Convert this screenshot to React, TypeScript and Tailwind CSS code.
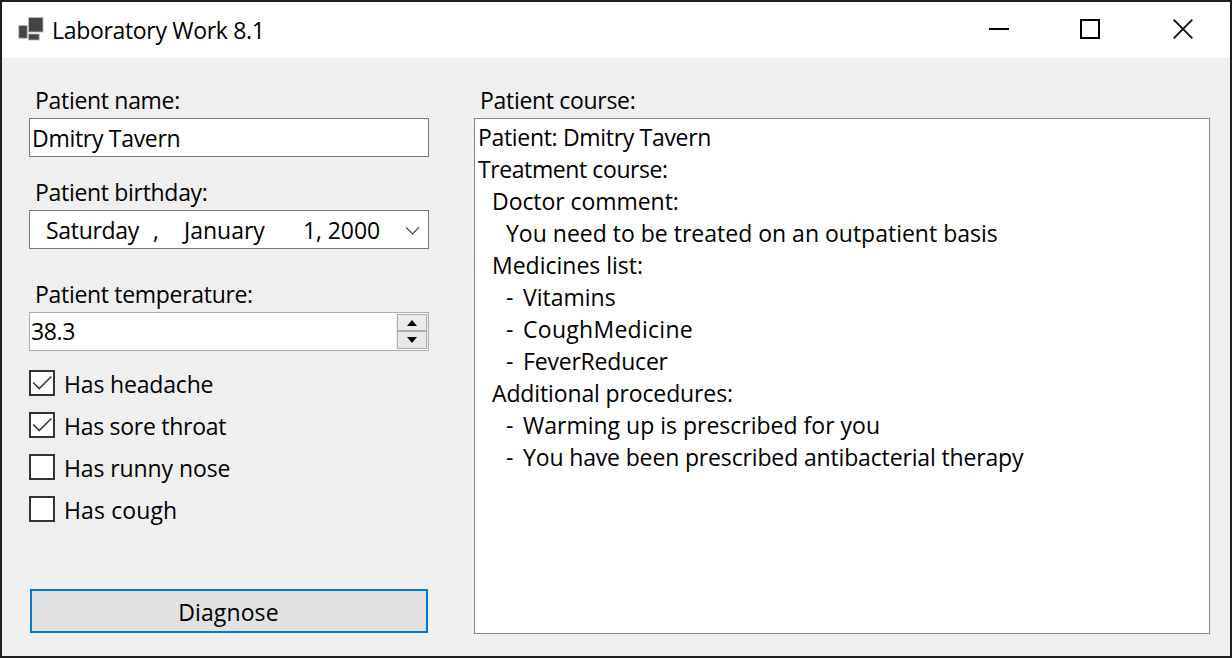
import { useState, type ReactNode } from "react";

const courseLines: { text: string; bullet?: boolean; className: string }[] = [
  { text: "Patient: Dmitry Tavern", className: "pl-[3px] tracking-[-0.32px]" },
  { text: "Treatment course:", className: "pl-[3px] tracking-[-0.41px]" },
  { text: "Doctor comment:", className: "pl-[17px] tracking-[-0.06px]" },
  { text: "You need to be treated on an outpatient basis", className: "pl-[31px]" },
  { text: "Medicines list:", className: "pl-[17px]" },
  { text: "Vitamins", bullet: true, className: "" },
  { text: "CoughMedicine", bullet: true, className: "tracking-[0.28px]" },
  { text: "FeverReducer", bullet: true, className: "tracking-[-0.2px]" },
  { text: "Additional procedures:", className: "pl-[17px] tracking-[-0.13px]" },
  { text: "Warming up is prescribed for you", bullet: true, className: "" },
  { text: "You have been prescribed antibacterial therapy", bullet: true, className: "tracking-[-0.15px]" },
];

function FieldLabel({ children }: { children: ReactNode }) {
  return <div className="h-8 pl-1.5 leading-[29px] tracking-[-0.31px]">{children}</div>;
}

function CheckRow({ label, initial, className }: { label: string; initial: boolean; className: string }) {
  const [checked, setChecked] = useState(initial);
  return (
    <button
      type="button"
      role="checkbox"
      aria-checked={checked}
      onClick={() => setChecked(!checked)}
      className="flex h-[42px] items-start text-left"
    >
      <span className="flex size-[26px] shrink-0 items-center justify-center border-2 border-[#333333] bg-white">
        {checked && (
          <svg width="22" height="22" viewBox="0 0 22 22" fill="none" stroke="#3c3c3c" strokeWidth="1.7">
            <path d="M2.2 10.5 L8.2 16.5 L20.4 4.5" />
          </svg>
        )}
      </span>
      <span className={"pl-[9px] leading-[28px] " + className}>{label}</span>
    </button>
  );
}

export default function App() {
  return (
    <div className="flex h-[658px] w-[1232px] flex-col overflow-hidden border-2 border-[#202022] bg-[#efefef] font-['Open_Sans','Noto_Sans',sans-serif] text-[23px] whitespace-pre text-black">
      <header className="flex h-14 shrink-0 items-center bg-white">
        <svg className="ml-[15px] mb-[3px]" width="28" height="26" viewBox="0 0 28 26">
          <g fill="#444444" stroke="#b8b8b8" strokeWidth="0.8">
            <rect x="1.8" y="9.6" width="8.4" height="12.6" />
            <rect x="11.6" y="1.6" width="14.4" height="14.4" />
            <rect x="11.6" y="18" width="10.6" height="6" />
          </g>
        </svg>
        <h1 className="ml-[7px] flex-1 leading-[56px] tracking-[-0.32px]">Laboratory Work 8.1</h1>
        <div className="flex items-center pr-[37px] pb-0.5">
          <svg width="20" height="22" viewBox="0 0 20 22"><path d="M0 11h20" stroke="#000" strokeWidth="2" /></svg>
          <svg className="ml-[71px]" width="20" height="22" viewBox="0 0 20 22">
            <rect x="1" y="2" width="18" height="18" fill="none" stroke="#000" strokeWidth="2" />
          </svg>
          <svg className="ml-[73px]" width="20" height="22" viewBox="0 0 20 22">
            <path d="M0.7 1.7 L19.3 20.3 M19.3 1.7 L0.7 20.3" stroke="#111" strokeWidth="1.9" />
          </svg>
        </div>
      </header>

      <main className="flex flex-1 pt-7 pl-[27px]">
        <section className="flex w-[400px] flex-col">
          <FieldLabel>Patient name:</FieldLabel>
          <div className="h-[39px] border border-[#7a7a7a] bg-white pl-0.5 leading-[38px] tracking-[-0.3px]">Dmitry Tavern</div>

          <div className="h-[21px]" />
          <FieldLabel>Patient birthday:</FieldLabel>
          <div className="flex h-[39px] border border-[#7a7a7a] bg-white pl-4 leading-[38px]">
            <span className="w-[107px] tracking-[-0.3px]">Saturday</span>
            <span className="w-[31px]">,</span>
            <span className="w-[119px]">January</span>
            <span className="w-[102px] tracking-[-0.1px]">1, 2000</span>
            <svg className="mt-3" width="15" height="15" viewBox="0 0 15 15" fill="none" stroke="#444" strokeWidth="1.3">
              <path d="M1 4.4 L7.5 10.9 L14 4.4" />
            </svg>
          </div>

          <div className="h-[31px]" />
          <FieldLabel>Patient temperature:</FieldLabel>
          <div className="flex h-[39px] justify-between border border-[#abadb3] bg-white pl-px leading-[37px]">
            <span className="tracking-[-0.4px]">38.3</span>
            <div className="my-px flex w-8 flex-col bg-[#efefef] pr-px pl-px">
              <div className="flex h-[17px] items-center justify-center border border-[#acacac] bg-[#ebebeb]">
                <svg width="10" height="6" viewBox="0 0 10 6"><path d="M5 0 L10 6 H0 Z" /></svg>
              </div>
              <div className="flex h-[18px] items-center justify-center border border-[#acacac] bg-[#e9e9e9]">
                <svg width="10" height="6" viewBox="0 0 10 6"><path d="M0 0 H10 L5 6 Z" /></svg>
              </div>
            </div>
          </div>

          <div className="flex flex-col pt-[19px]">
            <CheckRow label="Has headache" initial={true} className="tracking-[-0.17px]" />
            <CheckRow label="Has sore throat" initial={true} className="tracking-[-0.27px]" />
            <CheckRow label="Has runny nose" initial={false} className="tracking-[-0.1px]" />
            <CheckRow label="Has cough" initial={false} className="tracking-[0.12px]" />
          </div>

          <button
            type="button"
            className="mx-px mt-[51px] h-11 border-2 border-[#0078d7] bg-[#e1e1e1] pr-px text-center leading-[42px] tracking-[0.1px]"
          >
            Diagnose
          </button>
        </section>

        <section className="ml-[45px] flex w-[736px] flex-col">
          <FieldLabel>Patient course:</FieldLabel>
          <div className="h-[516px] border border-[#828790] bg-white pt-0.5">
            {courseLines.map((line) => (
              <div key={line.text} className="flex h-8 leading-8">
                {line.bullet && <span className="w-[17px] ml-[31px]">-</span>}
                <span className={line.className}>{line.text}</span>
              </div>
            ))}
          </div>
        </section>
      </main>
    </div>
  );
}
